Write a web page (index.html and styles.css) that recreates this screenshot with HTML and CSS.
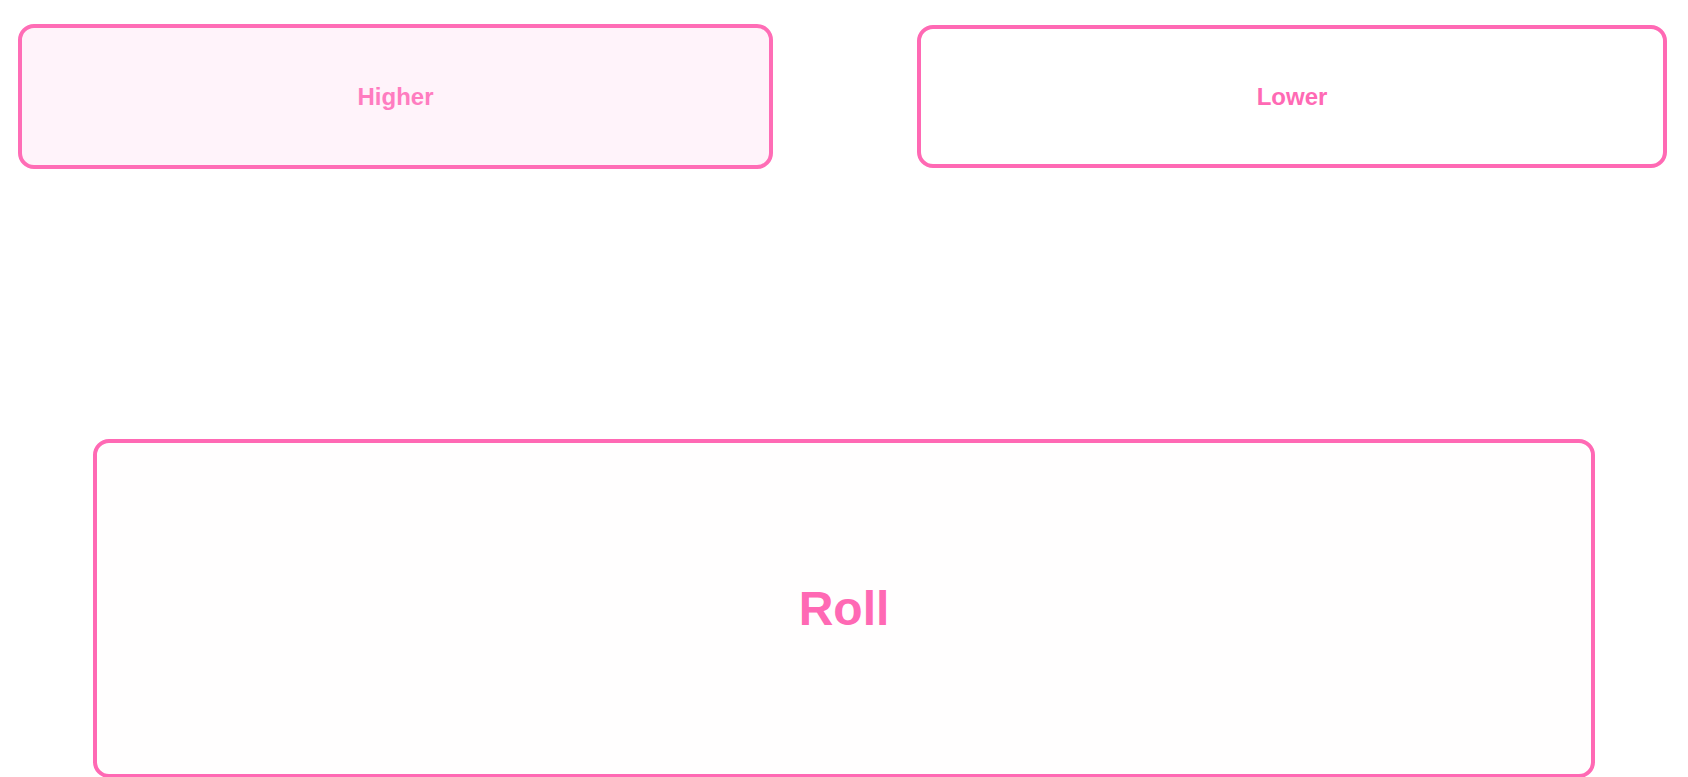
FILE: index.html
```html
<!DOCTYPE html>
<html>
<head>
<meta charset="utf-8">
<link rel="stylesheet" href="styles.css">
</head>
<body>
<div class="game">
  <div class="choices">
    <button class="choice choice-active">Higher</button>
    <button class="choice">Lower</button>
  </div>
  <div class="roll-wrap">
    <button class="roll">Roll</button>
  </div>
</div>
</body>
</html>
```
FILE: styles.css
```css
html, body {
  margin: 0;
  padding: 0;
  background: #ffffff;
}
body {
  font-family: "Liberation Sans", Arial, sans-serif;
  height: 777px;
  overflow: hidden;
}
.game {
  display: flex;
  flex-direction: column;
}
.choices {
  display: flex;
  justify-content: space-between;
  align-items: center;
  padding: 24px 21px 0 18px;
  height: 145px;
}
.choice {
  box-sizing: border-box;
  width: 750px;
  height: 143px;
  border: 4px solid #ff69b4;
  border-radius: 16px;
  background: #ffffff;
  color: #ff69b4;
  font-family: "Liberation Sans", Arial, sans-serif;
  font-weight: bold;
  font-size: 24px;
  padding: 0;
}
.choice-active {
  width: 755px;
  height: 145px;
  background: #fff3fa;
  color: #ff7cc0;
  border-color: #ff6db6;
}
.roll-wrap {
  display: flex;
  justify-content: center;
  margin-top: 270px;
}
.roll {
  box-sizing: border-box;
  width: 1502px;
  height: 339px;
  border: 4px solid #ff69b4;
  border-radius: 16px;
  background: #fffefe;
  color: #ff69b4;
  font-family: "Liberation Sans", Arial, sans-serif;
  font-weight: bold;
  font-size: 48px;
  padding: 0;
}
```
